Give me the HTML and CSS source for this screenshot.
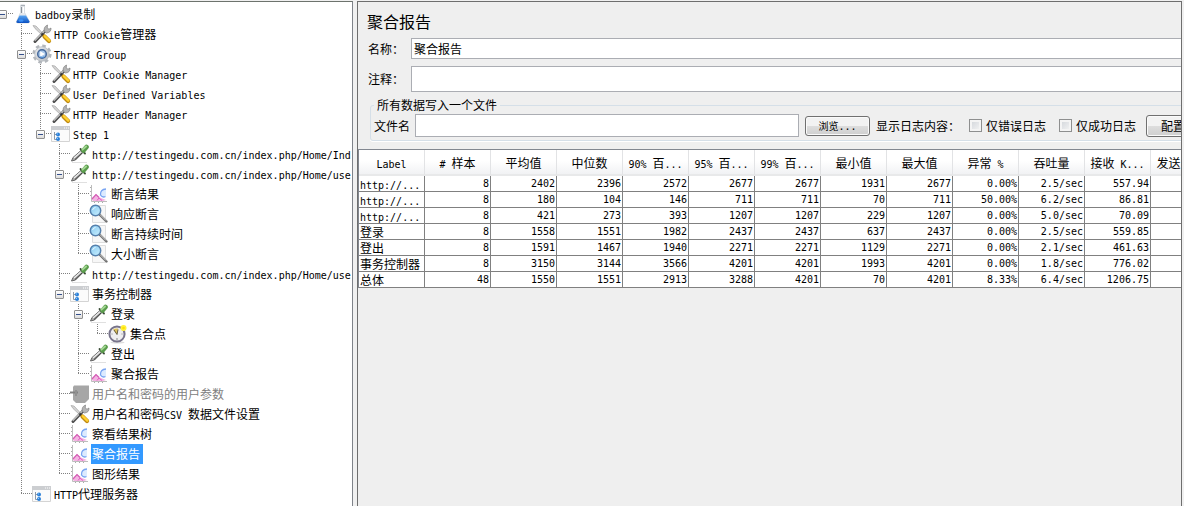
FILE: index.html
```html
<!DOCTYPE html>
<html lang="zh-CN">
<head>
<meta charset="utf-8">
<title>聚合报告</title>
<link rel="stylesheet" href="styles.css">
</head>
<body>
<svg class="sprite" aria-hidden="true">
  <defs>
    <linearGradient id="g-blue" x1="0" y1="0" x2="0" y2="1"><stop offset="0" stop-color="#5aa6f2"/><stop offset="1" stop-color="#0a4fc0"/></linearGradient>
    <linearGradient id="g-lens" x1="0" y1="0" x2="1" y2="1"><stop offset="0" stop-color="#86c8f0"/><stop offset="1" stop-color="#c9f0ff"/></linearGradient>
    <linearGradient id="g-gear" x1="0" y1="0" x2="1" y2="1"><stop offset="0" stop-color="#eceef0"/><stop offset="1" stop-color="#b4b9be"/></linearGradient>
  </defs>
  <symbol id="flask" viewBox="0 0 20 20">
    <path d="M7.500 1h4v7.500l5 9q0 1.500-1.500 1.500H5q-2 0-1.500-1.500l4-9z" fill="#e6e9ed" stroke="#cdd2d8" stroke-width=".7"/>
    <path d="M6.500 11.500h6.500l3.500 6q0 1.500-1.500 1.500H5q-2 0-1.500-1.500z" fill="url(#g-blue)"/>
    <path d="M8 1.500h4" stroke="#aab0b7" stroke-width="1.200"/>
    <path d="M8.500 3v6" stroke="#8b929b"/><path d="M10.500 3v6" stroke="#fff"/>
    <ellipse cx="8" cy="16.500" rx="2.500" ry="1.200" fill="#3e92f5"/>
  </symbol>
  <symbol id="tools" viewBox="0 0 20 20">
    <path d="M1 1.500l3 .5L11.500 10 10 11 3 4.500z" fill="#d4d4d4" stroke="#9a9a9a" stroke-width=".6"/>
    <path d="M3 17.500L14 6" stroke="#4d4d4d" stroke-width="3" stroke-linecap="round"/>
    <path d="M2.700 16.700L14 5.500" stroke="#c4c4c4" stroke-width="1.200"/>
    <path d="M12.500 7.500Q11 3 15.500 1l-.3 3 1.800 1.200L19 4q.3 4.500-4.500 5z" fill="#b5b5b5" stroke="#808080" stroke-width=".7"/>
    <path d="M9.500 9.500l2.500 2.500" stroke="#333" stroke-width="2"/>
    <path d="M12.500 12.500L17 17" stroke="#c08a10" stroke-width="4.200" stroke-linecap="round"/>
    <path d="M12.800 12.200L17.300 16.600" stroke="#ffd030" stroke-width="2.400" stroke-linecap="round"/>
  </symbol>
  <symbol id="gear" viewBox="0 0 20 20">
    <circle cx="10" cy="10" r="8.200" fill="none" stroke="#b3b7bc" stroke-width="2.800" stroke-dasharray="3.500 2.940"/>
    <circle cx="10" cy="10" r="7.300" fill="url(#g-gear)" stroke="#b0b5ba" stroke-width=".7"/>
    <circle cx="10" cy="10" r="4.300" fill="#a9c8ea" stroke="#46699c" stroke-width="1.500"/>
    <path d="M8.200 7.200l4.800 2.800-4.800 2.800z" fill="#fff"/>
    <path d="M8.200 12.800q2 1.400 4 0" fill="none" stroke="#4a92e0"/>
  </symbol>
  <symbol id="panel" viewBox="0 0 20 20">
    <path d="M.5 2.500h18v15H.5z" fill="#fbfbfb" stroke="#d4d4d4"/>
    <path d="M0 2h19v4H0z" fill="#ccced1"/>
    <path d="M13 4h1M15 4h1M17 4h1" stroke="#fff"/>
    <path d="M3.500 8v7.500H6M3.500 10.500H6" fill="none" stroke="#8d99a8"/>
    <circle cx="7" cy="10.500" r="2" fill="#2b80d8"/><circle cx="7" cy="15" r="2" fill="#2b80d8"/>
    <path d="M6 10h1M6 14.500h1" stroke="#8cc6ff"/>
  </symbol>
  <symbol id="dropper" viewBox="0 0 20 20">
    <path d="M2 18.500h15" stroke="#e0e0e0"/>
    <path d="M1.500 17L3 13.500 11 6.500 13 8.500 5.500 16z" fill="#a8a8a8" stroke="#5a5a5a" stroke-width=".9"/>
    <path d="M4 14L11 7.800" stroke="#ededed" stroke-width="1.200"/>
    <path d="M5 15.500L12 9" stroke="#444" stroke-width="1"/>
    <path d="M10.500 5l4.500 4.500" stroke="#394b36" stroke-width="1.800" stroke-linecap="round"/>
    <path d="M13.500 6.500L16.500 3" stroke="#5a9c4c" stroke-width="4.600" stroke-linecap="round"/>
    <path d="M12.500 5.500L16 2.500" stroke="#a3d793" stroke-width="2" stroke-linecap="round"/>
  </symbol>
  <symbol id="chart" viewBox="0 0 20 20">
    <path d="M2.500 1v16.500H18" fill="none" stroke="#bdbdbd"/>
    <path d="M1 3.500h1M1 7.500h1M1 11.500h1M5.500 18v1M9.500 18v1M13.500 18v1" stroke="#aaa"/>
    <path d="M3 16v-2l4-4 3 3 2 1 5 2-3 1H4z" fill="#f3b4e2"/>
    <path d="M3 15l4-4.500 3 3" fill="none" stroke="#d45cb4" stroke-width="1.200"/>
    <path d="M8 16.500l2-2.500 3 2.500" fill="none" stroke="#e05cc0"/>
    <path d="M11.500 11Q11 6 17 5v7q-3 2.500-5.500-1z" fill="#dcebff"/>
    <path d="M17 5q-6 .5-5.500 6 2 3 5 1.500" fill="none" stroke="#78a4f2" stroke-width="1.300"/>
  </symbol>
  <symbol id="lens" viewBox="0 0 20 20">
    <path d="M3.500 1.500h13v17h-13z" fill="#f7f7f7" stroke="#dedede"/>
    <path d="M10.500 10.500l7 7" stroke="#707070" stroke-width="2.400" stroke-linecap="round"/>
    <path d="M11 10.500l6 6" stroke="#dedede" stroke-width=".9"/>
    <circle cx="6.500" cy="6.500" r="5.200" fill="url(#g-lens)" stroke="#5580ad" stroke-width="1.500"/>
    <path d="M3.500 6q1-2.500 3-2.500" fill="none" stroke="#eaf9ff"/>
  </symbol>
  <symbol id="clock" viewBox="0 0 20 20">
    <ellipse cx="9.500" cy="18.500" rx="7" ry="1" fill="#ddd"/>
    <circle cx="9" cy="10" r="7.600" fill="#eeeeef" stroke="#77738a" stroke-width="2"/>
    <path d="M9 10L5 5.500Q7 4 10 4.500z" fill="#dcc05a"/>
    <path d="M6 6l3 4.500L10 5.500" fill="none" stroke="#665c3c"/>
    <path d="M9 14v2M3.500 10h1M13.500 10h1" stroke="#888"/>
    <circle cx="15.500" cy="4" r="3" fill="#fff03c"/><circle cx="15.500" cy="4" r="1.300" fill="#ffe000"/>
  </symbol>
  <symbol id="plug" viewBox="0 0 20 20">
    <path d="M4 1.500h15v13.500l-4 4H6l-3-3V3z" fill="#a6a6a6"/>
    <path d="M0 8.500h8" stroke="#808080" stroke-width="2"/><path d="M5 6h2v6H5z" fill="#909090"/>
  </symbol>
</svg>
<div class="window">
  <nav class="sidebar" aria-label="测试计划">
    <ul class="tree">
      <li>
        <div class="node"><button class="toggle" aria-label="折叠"></button><svg class="icon"><use href="#flask"/></svg><span class="label"><span class="en">badboy</span>录制</span></div>
        <ul>
          <li><div class="node"><svg class="icon"><use href="#tools"/></svg><span class="label"><span class="en">HTTP Cookie</span>管理器</span></div></li>
          <li>
            <div class="node"><button class="toggle" aria-label="折叠"></button><svg class="icon"><use href="#gear"/></svg><span class="label"><span class="en">Thread Group</span></span></div>
            <ul>
              <li><div class="node"><svg class="icon"><use href="#tools"/></svg><span class="label"><span class="en">HTTP Cookie Manager</span></span></div></li>
              <li><div class="node"><svg class="icon"><use href="#tools"/></svg><span class="label"><span class="en">User Defined Variables</span></span></div></li>
              <li><div class="node"><svg class="icon"><use href="#tools"/></svg><span class="label"><span class="en">HTTP Header Manager</span></span></div></li>
              <li>
                <div class="node"><button class="toggle" aria-label="折叠"></button><svg class="icon"><use href="#panel"/></svg><span class="label"><span class="en">Step 1</span></span></div>
                <ul>
                  <li><div class="node"><svg class="icon"><use href="#dropper"/></svg><span class="label"><span class="en">http://testingedu.com.cn/index.php/Home/Ind</span></span></div></li>
                  <li>
                    <div class="node"><button class="toggle" aria-label="折叠"></button><svg class="icon"><use href="#dropper"/></svg><span class="label"><span class="en">http://testingedu.com.cn/index.php/Home/user</span></span></div>
                    <ul>
                      <li><div class="node"><svg class="icon"><use href="#chart"/></svg><span class="label">断言结果</span></div></li>
                      <li><div class="node"><svg class="icon"><use href="#lens"/></svg><span class="label">响应断言</span></div></li>
                      <li><div class="node"><svg class="icon"><use href="#lens"/></svg><span class="label">断言持续时间</span></div></li>
                      <li><div class="node"><svg class="icon"><use href="#lens"/></svg><span class="label">大小断言</span></div></li>
                    </ul>
                  </li>
                  <li><div class="node"><svg class="icon"><use href="#dropper"/></svg><span class="label"><span class="en">http://testingedu.com.cn/index.php/Home/user</span></span></div></li>
                  <li>
                    <div class="node"><button class="toggle" aria-label="折叠"></button><svg class="icon"><use href="#panel"/></svg><span class="label">事务控制器</span></div>
                    <ul>
                      <li>
                        <div class="node"><button class="toggle" aria-label="折叠"></button><svg class="icon"><use href="#dropper"/></svg><span class="label">登录</span></div>
                        <ul>
                          <li><div class="node"><svg class="icon"><use href="#clock"/></svg><span class="label">集合点</span></div></li>
                        </ul>
                      </li>
                      <li><div class="node"><svg class="icon"><use href="#dropper"/></svg><span class="label">登出</span></div></li>
                      <li><div class="node"><svg class="icon"><use href="#chart"/></svg><span class="label">聚合报告</span></div></li>
                    </ul>
                  </li>
                  <li><div class="node"><svg class="icon"><use href="#plug"/></svg><span class="label disabled">用户名和密码的用户参数</span></div></li>
                  <li><div class="node"><svg class="icon"><use href="#tools"/></svg><span class="label">用户名和密码<span class="en">CSV </span>数据文件设置</span></div></li>
                  <li><div class="node"><svg class="icon"><use href="#chart"/></svg><span class="label">察看结果树</span></div></li>
                  <li><div class="node"><svg class="icon"><use href="#chart"/></svg><span class="label selected">聚合报告</span></div></li>
                  <li><div class="node"><svg class="icon"><use href="#chart"/></svg><span class="label">图形结果</span></div></li>
                </ul>
              </li>
            </ul>
          </li>
          <li><div class="node"><svg class="icon"><use href="#panel"/></svg><span class="label"><span class="en">HTTP</span>代理服务器</span></div></li>
        </ul>
      </li>
    </ul>
  </nav>
  <main class="content">
    <h1>聚合报告</h1>
    <div class="field"><label for="name">名称：</label><input id="name" type="text" value="聚合报告"></div>
    <div class="field tall"><label for="comment">注释：</label><input id="comment" type="text"></div>
    <fieldset>
      <legend>所有数据写入一个文件</legend>
      <div class="file-row">
        <label for="file">文件名</label>
        <input id="file" type="text">
        <button class="btn small" type="button">浏览<span class="en">...</span></button>
        <span class="log-label">显示日志内容：</span>
        <label class="check"><input type="checkbox">仅错误日志</label>
        <label class="check"><input type="checkbox">仅成功日志</label>
        <button class="btn" type="button">配置</button>
      </div>
    </fieldset>
    <table>
      <thead>
        <tr><th><span class="en">Label</span></th><th><span class="en"># </span>样本</th><th>平均值</th><th>中位数</th><th><span class="en">90% </span>百<span class="en">...</span></th><th><span class="en">95% </span>百<span class="en">...</span></th><th><span class="en">99% </span>百<span class="en">...</span></th><th>最小值</th><th>最大值</th><th>异常<span class="en"> %</span></th><th>吞吐量</th><th>接收<span class="en"> K...</span></th><th>发送<span class="en"> K...</span></th></tr>
      </thead>
      <tbody>
        <tr><td><span class="en">http://...</span></td><td>8</td><td>2402</td><td>2396</td><td>2572</td><td>2677</td><td>2677</td><td>1931</td><td>2677</td><td>0.00%</td><td>2.5/sec</td><td>557.94</td><td></td></tr>
        <tr><td><span class="en">http://...</span></td><td>8</td><td>180</td><td>104</td><td>146</td><td>711</td><td>711</td><td>70</td><td>711</td><td>50.00%</td><td>6.2/sec</td><td>86.81</td><td></td></tr>
        <tr><td><span class="en">http://...</span></td><td>8</td><td>421</td><td>273</td><td>393</td><td>1207</td><td>1207</td><td>229</td><td>1207</td><td>0.00%</td><td>5.0/sec</td><td>70.09</td><td></td></tr>
        <tr><td>登录</td><td>8</td><td>1558</td><td>1551</td><td>1982</td><td>2437</td><td>2437</td><td>637</td><td>2437</td><td>0.00%</td><td>2.5/sec</td><td>559.85</td><td></td></tr>
        <tr><td>登出</td><td>8</td><td>1591</td><td>1467</td><td>1940</td><td>2271</td><td>2271</td><td>1129</td><td>2271</td><td>0.00%</td><td>2.1/sec</td><td>461.63</td><td></td></tr>
        <tr><td>事务控制器</td><td>8</td><td>3150</td><td>3144</td><td>3566</td><td>4201</td><td>4201</td><td>1993</td><td>4201</td><td>0.00%</td><td>1.8/sec</td><td>776.02</td><td></td></tr>
        <tr><td>总体</td><td>48</td><td>1550</td><td>1551</td><td>2913</td><td>3288</td><td>4201</td><td>70</td><td>4201</td><td>8.33%</td><td>6.4/sec</td><td>1206.75</td><td></td></tr>
      </tbody>
    </table>
  </main>
</div>
</body>
</html>
```
FILE: styles.css
```css
* { box-sizing: border-box; }

body {
  margin: 0;
  background: #f0f0f0;
  color: #000;
  font: 12px/20px "Noto Sans CJK SC", sans-serif;
}

button, input { font: inherit; color: inherit; }

.sprite { position: absolute; width: 0; height: 0; }

.window {
  display: grid;
  grid-template-columns: 353px minmax(0, 1fr);
  gap: 4px;
  min-height: 100vh;
  padding: 1px 2px 0 0;
}

.en {
  font-family: "DejaVu Sans Mono", monospace;
  font-size: 10px;
  line-height: 10px;
  white-space: pre;
}

/* Tree */
.sidebar {
  overflow: hidden;
  padding-top: 2px;
  background: #fff;
  border-top: 1px solid #6d736d;
  border-right: 1px solid #7f838a;
}

.tree, .tree ul { margin: 0; padding: 0; list-style: none; }
.tree { margin-left: -2px; }
.tree ul { padding-left: 19px; }

.tree ul > li {
  background: repeating-linear-gradient(#808080 0 1px, transparent 1px 2px) 4px 0 / 1px 100% no-repeat;
}
.tree ul > li:last-child { background-size: 1px 10px; }

.node {
  display: flex;
  align-items: center;
  height: 20px;
  padding-left: 15px;
  background: repeating-linear-gradient(90deg, #808080 0 1px, transparent 1px 2px) 4px 9px / 11px 1px no-repeat;
}

.toggle {
  flex: none;
  width: 9px;
  height: 9px;
  margin-left: -15px;
  margin-right: 6px;
  padding: 0;
  border: 1px solid #8f8f8f;
  border-radius: 1px;
  background: linear-gradient(#35508c, #35508c) center / 5px 1px no-repeat, linear-gradient(#fff, #dcdcdc);
}

.icon { flex: none; width: 20px; height: 20px; }

.label { padding: 0 3px 0 2px; white-space: nowrap; }
.disabled { color: #808080; }
.selected {
  margin-left: 1px;
  padding-left: 1px;
  background: #3399ff;
  color: #fff;
}

/* Report panel */
.content {
  overflow: hidden;
  padding: 9px 0 0;
  background: #efefef;
  border: solid #6e6e6e;
  border-width: 1px 1px 0;
}

h1 {
  margin: 0 0 7px 9px;
  font-size: 16px;
  font-weight: 400;
  line-height: 20px;
}

.field {
  display: flex;
  align-items: center;
  height: 21px;
  margin: 0 -26px 7px 10px;
}
.field.tall { height: 26px; margin-bottom: 6px; }
.field label { flex: none; width: 43px; }

input[type="text"] {
  flex: 1;
  min-width: 0;
  height: 100%;
  padding: 0 2px;
  border: 1px solid #abadb3;
  border-radius: 0;
  background: #fff;
}

fieldset {
  min-width: 0;
  margin: 0 -25px 8px 12px;
  padding: 2px 5px 3px 3px;
  border: 1px solid #d5dfe8;
  border-radius: 3px;
  box-shadow: 0 1px #fff;
}

legend { padding: 0 3px; line-height: 14px; }

.file-row { display: flex; align-items: center; height: 23px; }
.file-row > input { margin: 0 6px 0 5px; }
.file-row > label, .file-row > span, .btn { flex: none; }

.btn {
  width: 54px;
  height: 22px;
  padding: 0;
  border: 1px solid #707070;
  border-radius: 3px;
  background: linear-gradient(#f2f2f2 50%, #dddddd 50%, #cfcfcf);
  box-shadow: inset 0 0 0 1px #fafafa;
  line-height: 18px;
}
.btn.small { width: 65px; height: 20px; margin-right: 6px; font-size: 10px; }

.log-label { width: 93px; }

.check { display: flex; align-items: center; gap: 4px; width: 90px; }
.check:last-of-type { width: 87px; }

input[type="checkbox"] {
  appearance: none;
  width: 13px;
  height: 13px;
  margin: 0;
  border: 1px solid #8e8f8f;
  background: linear-gradient(135deg, #cfd3d8, #f6f6f6);
  box-shadow: inset 0 0 0 2px #f4f4f4;
}

table {
  width: 858px;
  table-layout: fixed;
  border-collapse: separate;
  border-spacing: 0;
  border-top: 1px solid #828790;
  border-left: 1px solid #828790;
  box-sizing: content-box;
}

th {
  height: 26px;
  padding: 2px 0 0;
  border-right: 1px solid #e2e3e5;
  border-bottom: 2px solid #e8e9ea;
  background: linear-gradient(#fff 45%, #f1f2f4);
  font-weight: 400;
  line-height: 20px;
  text-align: center;
  white-space: nowrap;
}

td {
  height: 16px;
  padding: 0 1px;
  border-right: 1px solid #808080;
  border-bottom: 1px solid #808080;
  background: #fff;
  font: 10px/15px "DejaVu Sans Mono", monospace;
  text-align: right;
  white-space: nowrap;
}
td:first-child {
  font: 12px/15px "Noto Sans CJK SC", sans-serif;
  text-align: left;
}
```
